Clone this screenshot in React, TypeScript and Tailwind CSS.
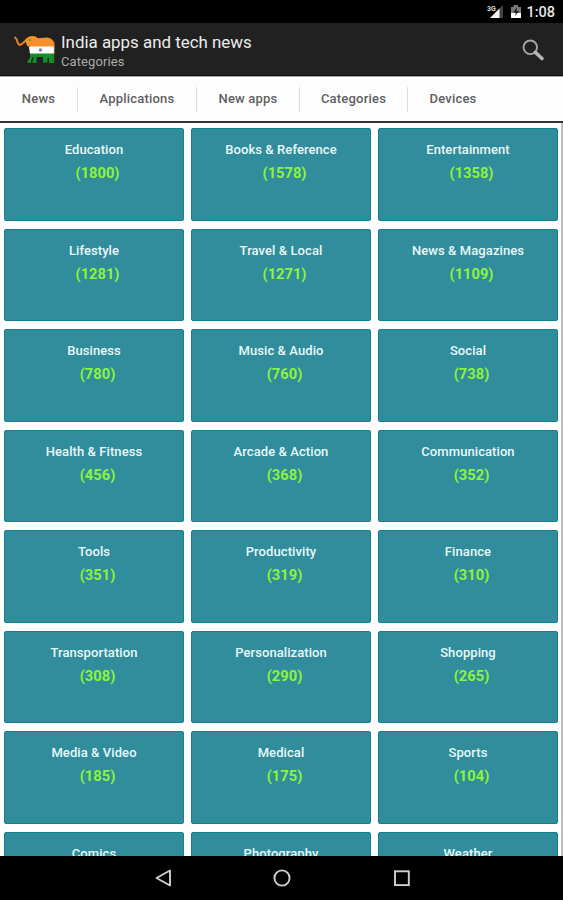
const categories: [string, number | null][] = [
  ["Education", 1800], ["Books & Reference", 1578], ["Entertainment", 1358],
  ["Lifestyle", 1281], ["Travel & Local", 1271], ["News & Magazines", 1109],
  ["Business", 780], ["Music & Audio", 760], ["Social", 738],
  ["Health & Fitness", 456], ["Arcade & Action", 368], ["Communication", 352],
  ["Tools", 351], ["Productivity", 319], ["Finance", 310],
  ["Transportation", 308], ["Personalization", 290], ["Shopping", 265],
  ["Media & Video", 185], ["Medical", 175], ["Sports", 104],
  ["Comics", null], ["Photography", null], ["Weather", null],
];

const tabs = [
  { label: "News", width: "w-[78px]" },
  { label: "Applications", width: "w-[119px]" },
  { label: "New apps", width: "w-[103px]" },
  { label: "Categories", width: "w-[108px]" },
  { label: "Devices", width: "w-[90px]" },
];

function Elephant() {
  return (
    <svg width="42" height="30" viewBox="0 0 42 30" className="shrink-0">
      <path d="M1 2.5 Q3 4 3.5 7 Q4.5 10.5 7 9.5 Q9.5 8 13 4.5" fill="none" stroke="#e98324" strokeWidth="2" strokeLinecap="round" />
      <path d="M11 5 Q14 1 18.5 1 Q22 1 24 3.2 L33 2.5 Q40 3.5 40.2 9 V12 H17 L14 11.5 Q12.5 10.5 12 7.5 Z" fill="#f6912b" />
      <path d="M15 12 L17 11.5 H40.2 V19 H16 Z" fill="#fff" />
      <circle cx="26.5" cy="15" r="1.7" fill="#7b83bd" />
      <path d="M16 18.5 H40.2 V28 H35 V23 H33.5 V27.5 H29 V22 H22.5 V28 H18.5 V26 L20 22.5 H18 L17 28 H13.5 V26 L16 23 Z" fill="#168d25" />
      <circle cx="16" cy="5" r="1.3" fill="#8c9b22" />
      <path d="M40.2 7 V18" fill="none" stroke="#c6742a" strokeWidth=".7" />
    </svg>
  );
}

function StatusBar() {
  return (
    <div className="flex h-[23px] shrink-0 justify-end bg-black pr-[8px]">
      <svg width="38" height="23" viewBox="0 0 38 23" className="mr-[2px]">
        <text x="1" y="11" fill="#ddd" fontSize="7" fontWeight="bold" fontFamily="Roboto, sans-serif">3G</text>
        <path d="M17 5 V18 H4 Z" fill="#444" />
        <path d="M13.5 8.5 V18 H4 Z" fill="#f4f4f4" />
        <path d="M25 7 h2.5 v-2 h4.5 v2 H35 V18 H25 Z" fill="#777" />
        <path d="M25 13 H35 V18 H25 Z" fill="#fff" />
        <path d="M31 7 L27.5 12.5 H30 L29 16 L33 11 H30.5 Z" fill="#171717" />
      </svg>
      <span className="text-[14.5px] leading-[26px] font-medium text-[#e6e6e6]">1:08</span>
    </div>
  );
}

export default function App() {
  return (
    <div className="flex h-[900px] w-[563px] flex-col overflow-hidden bg-white font-[Roboto,sans-serif]">
      <StatusBar />
      <header className="flex h-[53px] shrink-0 items-start border-b border-[#0c0c0c] bg-[#212121] pl-[14px]">
        <div className="pt-[12px]"><Elephant /></div>
        <div className="ml-[5px] flex-1 pt-[9px] whitespace-nowrap">
          <h1 className="text-[16.9px] leading-[21px] text-[#ececec]">India apps and tech news</h1>
          <p className="text-[13px] leading-[17px] tracking-[0.1px] text-[#ababab]">Categories</p>
        </div>
        <svg width="24" height="24" viewBox="0 0 24 24" className="mt-[15px] mr-[18px]" fill="none">
          <circle cx="9.3" cy="9.3" r="6.8" stroke="#a5a5a5" strokeWidth="1.9" />
          <path d="M14.3 14.3 L21 20.5" stroke="#b5b5b5" strokeWidth="3.6" strokeLinecap="round" />
        </svg>
      </header>
      <nav className="flex h-[45px] shrink-0 items-center border-t border-[#aaaaaa] bg-[#fdfdfd]">
        {tabs.map((tab, i) => (
          <div
            key={tab.label}
            className={`${tab.width} flex h-[25px] items-center justify-center text-[13px] font-medium tracking-[0.2px] whitespace-nowrap text-[#606060] ${i < 4 ? "border-r border-[#dedede]" : ""}`}
          >
            {tab.label}
          </div>
        ))}
      </nav>
      <div className="h-[2px] shrink-0 bg-[#343434]" />
      <main className="min-h-0 flex-1 overflow-hidden border-r-2 border-[#bdbdbd] pt-[5px] pl-[4px]">
        <div className="grid auto-rows-[92.5px] grid-cols-[repeat(3,180px)] gap-x-[7px] gap-y-[8.05px]">
          {categories.map(([name, count]) => (
            <section key={name} className="rounded-[2px] border border-[#148190] bg-[#318d9b] pt-[11px] text-center whitespace-nowrap">
              <h2 className="text-[13px] leading-[19px] font-medium tracking-[0.08px] text-[#e8f8f9]">{name}</h2>
              {count !== null && (
                <p className="mt-[4px] pl-[7px] text-[14.7px] leading-[20px] font-bold text-[#8cf43c]">({count})</p>
              )}
            </section>
          ))}
        </div>
      </main>
      <footer className="flex h-[44px] shrink-0 items-start justify-center bg-black pt-[12px]">
        <svg width="260" height="20" viewBox="0 0 260 20" fill="none" stroke="#d0d0d0" strokeWidth="1.9">
          <path d="M18 2.5 V17.5 L4.5 10 Z" strokeLinejoin="round" />
          <circle cx="130" cy="10" r="7.6" />
          <rect x="243" y="3.3" width="13.8" height="13.8" />
        </svg>
      </footer>
    </div>
  );
}
